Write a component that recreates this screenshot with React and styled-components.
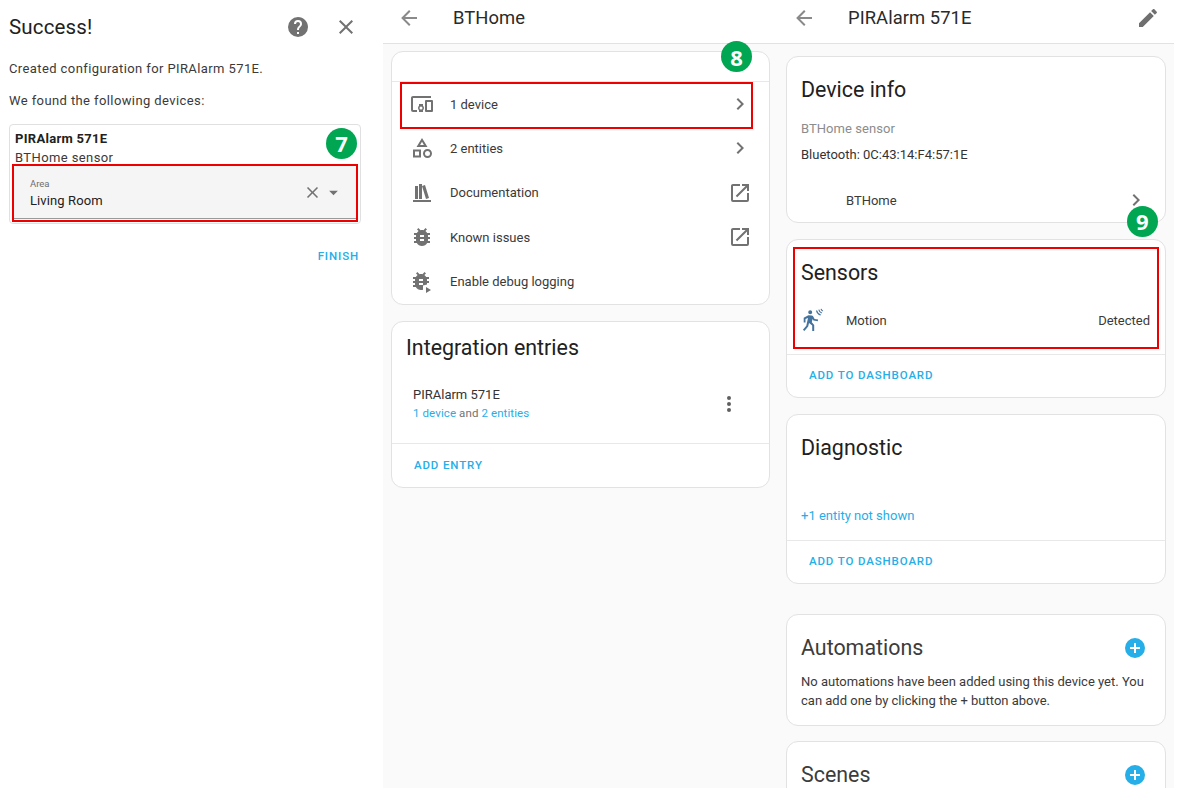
import React from "react";
import styled, { createGlobalStyle } from "styled-components";

const P = {
  help: "M15.07,11.25L14.17,12.17C13.45,12.89 13,13.5 13,15H11V14.5C11,13.39 11.45,12.39 12.17,11.67L13.41,10.41C13.78,10.05 14,9.55 14,9C14,7.89 13.1,7 12,7A2,2 0 0,0 10,9H8A4,4 0 0,1 12,5A4,4 0 0,1 16,9C16,9.88 15.64,10.67 15.07,11.25M13,19H11V17H13M12,2A10,10 0 0,0 2,12A10,10 0 0,0 12,22A10,10 0 0,0 22,12C22,6.47 17.5,2 12,2Z",
  close: "M19,6.41L17.59,5L12,10.59L6.41,5L5,6.41L10.59,12L5,17.59L6.41,19L12,13.41L17.59,19L19,17.59L13.41,12L19,6.41Z",
  caret: "M7,10L12,15L17,10H7Z",
  back: "M20,11V13H8L13.5,18.5L12.08,19.92L4.16,12L12.08,4.08L13.5,5.5L8,11H20Z",
  chevron: "M8.59,16.58L13.17,12L8.59,7.41L10,6L16,12L10,18L8.59,16.58Z",
  open: "M14,3V5H17.59L7.76,14.83L9.17,16.24L19,6.41V10H21V3M19,19H5V5H12V3H5C3.89,3 3,3.9 3,5V19A2,2 0 0,0 5,21H19A2,2 0 0,0 21,19V12H19V19Z",
  pencil: "M20.71,7.04C21.1,6.65 21.1,6 20.71,5.63L18.37,3.29C18,2.9 17.35,2.9 16.96,3.29L15.12,5.12L18.87,8.87M3,17.25V21H6.75L17.81,9.93L14.06,6.18L3,17.25Z",
  dots: "M12,16A2,2 0 0,1 14,18A2,2 0 0,1 12,20A2,2 0 0,1 10,18A2,2 0 0,1 12,16M12,10A2,2 0 0,1 14,12A2,2 0 0,1 12,14A2,2 0 0,1 10,12A2,2 0 0,1 12,10M12,4A2,2 0 0,1 14,6A2,2 0 0,1 12,8A2,2 0 0,1 10,6A2,2 0 0,1 12,4Z",
  plus: "M17,13H13V17H11V13H7V11H11V7H13V11H17M12,2A10,10 0 0,0 2,12A10,10 0 0,0 12,22A10,10 0 0,0 22,12A10,10 0 0,0 12,2Z",
  bug: "M14,12H10V10H14M14,16H10V14H14M20,8H17.19C16.74,7.22 16.12,6.55 15.37,6.04L17,4.41L15.59,3L13.42,5.17C12.96,5.06 12.5,5 12,5C11.5,5 11.04,5.06 10.59,5.17L8.41,3L7,4.41L8.62,6.04C7.88,6.55 7.26,7.22 6.81,8H4V10H6.09C6.04,10.33 6,10.66 6,11V12H4V14H6V15C6,15.34 6.04,15.67 6.09,16H4V18H6.81C7.85,19.79 9.78,21 12,21C14.22,21 16.15,19.79 17.19,18H20V16H17.91C17.96,15.67 18,15.34 18,15V14H20V12H18V11C18,10.66 17.96,10.33 17.91,10H20V8Z",
  bugPlay: "M13,12H9V10H13M13,16H9V14H13M19,8H16.19C15.74,7.22 15.12,6.55 14.37,6.04L16,4.41L14.59,3L12.42,5.17C11.96,5.06 11.5,5 11,5C10.5,5 10.04,5.06 9.59,5.17L7.41,3L6,4.41L7.62,6.04C6.88,6.55 6.26,7.22 5.81,8H3V10H5.09C5.04,10.33 5,10.66 5,11V12H3V14H5V15C5,15.34 5.04,15.67 5.09,16H3V18H5.81C6.85,19.79 8.78,21 11,21C11.7,21 12.4,20.88 13,20.66V16.5L17,15.6V14H19V12H17V11C17,10.66 16.96,10.33 16.91,10H19V8ZM16,18V24L21,21L16,18Z",
  shelf: "M9 3V18H12V3H9M12 5L16 18L19 17L15 4L12 5M5 5V18H8V5H5M3 19V21H21V19H3Z",
  devices: "M3,6H21V4H3C1.89,4 1,4.89 1,6V18A2,2 0 0,0 3,20H7V18H3V6M13,12H9V13.78C8.39,14.33 8,15.11 8,16C8,16.89 8.39,17.67 9,18.22V20H13V18.22C13.61,17.67 14,16.88 14,16C14,15.12 13.61,14.33 13,13.78V12M11,17.5A1.5,1.5 0 0,1 9.5,16A1.5,1.5 0 0,1 11,14.5A1.5,1.5 0 0,1 12.5,16A1.5,1.5 0 0,1 11,17.5M22,8H16A1,1 0 0,0 15,9V19A1,1 0 0,0 16,20H22A1,1 0 0,0 23,19V9A1,1 0 0,0 22,8M21,18H17V10H21V18Z",
  shape: "M11,13.5V21.5H3V13.5H11M9,15.5H5V19.5H9V15.5M12,2L17.5,11H6.5L12,2M12,5.86L10.08,9H13.92L12,5.86M17.5,13C20,13 22,15 22,17.5C22,20 20,22 17.5,22C15,22 13,20 13,17.5C13,15 15,13 17.5,13M17.5,15A2.5,2.5 0 0,0 15,17.5A2.5,2.5 0 0,0 17.5,20A2.5,2.5 0 0,0 20,17.5A2.5,2.5 0 0,0 17.5,15Z",
};

const Global = createGlobalStyle`
  html, body { margin: 0; padding: 0; background: #fff; }
  body { font-family: Roboto, "Liberation Sans", sans-serif; color: #212121; overflow: hidden; }
  * { box-sizing: border-box; }
`;

const Svg = styled.svg`
  display: block;
  flex: none;
  width: ${(p) => p.$size || 24}px;
  height: ${(p) => p.$size || 24}px;
  fill: ${(p) => p.$color || "#727272"};
`;
const Icon = ({ d, size, color }) => (
  <Svg viewBox="0 0 24 24" $size={size} $color={color}><path d={d} /></Svg>
);

const Page = styled.div`
  display: flex;
  width: 1174px;
  height: 788px;
  overflow: hidden;
`;
const Dialog = styled.section`
  position: relative;
  flex: none;
  width: 383px;
  background: #fff;
  padding: 0 9px;
`;
const Screen = styled.section`
  position: relative;
  flex: none;
  width: ${(p) => p.$w}px;
  background: #fafafa;
  overflow: hidden;
`;
const DialogHead = styled.div`
  display: flex;
  align-items: center;
  height: 54px;
`;
const DialogTitle = styled.h2`
  flex: 1;
  margin: 0;
  font-size: 20.5px;
  font-weight: 400;
  letter-spacing: 0.15px;
  color: #212121;
`;
const HeadIcons = styled.div`
  display: flex;
  gap: 24px;
  margin-right: 16px;
`;
const DialogBody = styled.div`
  display: flex;
  flex-direction: column;
  gap: 16px;
  padding-top: 7px;
  margin-bottom: 14.5px;
`;
const DialogText = styled.p`
  margin: 0;
  height: 16px;
  font-size: 13px;
  line-height: 16px;
  letter-spacing: 0.4px;
  color: #3a3a3a;
`;
const DeviceCard = styled.div`
  position: relative;
  width: 352px;
  height: 100.5px;
  padding: 5.5px 5px 0;
  border: 1px solid #e0e0e0;
  border-radius: 4px;
`;
const DeviceName = styled.div`
  font-size: 13px;
  line-height: 17px;
  font-weight: 700;
  letter-spacing: 0.3px;
`;
const DeviceModel = styled.div`
  font-size: 13px;
  line-height: 17px;
  margin-top: 2px;
  letter-spacing: 0.4px;
  color: #3a3a3a;
`;
const Field = styled.div`
  display: flex;
  align-items: center;
  gap: 1px;
  height: 53px;
  margin: 0 -1px;
  width: 342px;
  padding: 0 12.5px 0 16px;
  background: #f5f5f5;
  border-bottom: 1px solid #9a9a9a;
  border-radius: 3px 3px 0 0;
`;
const FieldBody = styled.div`
  flex: 1;
  padding-top: 4px;
`;
const FieldLabel = styled.div`
  font-size: 9.5px;
  line-height: 12px;
  color: #6f6f6f;
`;
const FieldValue = styled.div`
  font-size: 13px;
  line-height: 18px;
  margin-top: 2px;
  letter-spacing: 0.1px;
`;
const DialogFoot = styled.div`
  display: flex;
  justify-content: flex-end;
  width: 350px;
  margin-top: 25px;
`;
const Action = styled.span`
  font-size: 11.5px;
  line-height: 14px;
  font-weight: 500;
  letter-spacing: 0.87px;
  color: #26aee8;
`;
const Header = styled.header`
  display: flex;
  align-items: center;
  height: 44px;
  padding: 0 14px 8px 14px;
  background: #fff;
  border-bottom: 1px solid #e2e2e2;
`;
const ScreenTitle = styled.h1`
  flex: 1;
  margin: 0 0 0 32px;
  font-size: 18.4px;
  font-weight: 400;
  letter-spacing: 0.05px;
  color: #2a2a2a;
`;
const Cards = styled.div`
  display: flex;
  flex-direction: column;
  padding: ${(p) => p.$top}px 8px 0 ${(p) => p.$left}px;
`;
const Card = styled.div`
  position: relative;
  flex: none;
  height: ${(p) => p.$h}px;
  margin-bottom: ${(p) => p.$gap ?? 15.5}px;
  background: #fff;
  border: 1px solid #e2e2e2;
  border-radius: 12px;
`;
const CardTop = styled.div`
  height: 30px;
  border-bottom: 1px solid #e8e8e8;
`;
const NavRow = styled.div`
  display: flex;
  align-items: center;
  height: 44.3px;
  padding: 0 17px 0 18px;
`;
const RowLabel = styled.span`
  flex: 1;
  margin-left: 16px;
  font-size: 13px;
  color: #3a3a3a;
`;
const CardTitle = styled.h3`
  display: flex;
  align-items: center;
  justify-content: space-between;
  margin: 0;
  padding: ${(p) => p.$pt ?? 17}px 18px 0 14px;
  font-size: 21.4px;
  line-height: 32px;
  font-weight: 400;
  color: ${(p) => (p.$soft ? "#3c3c3c" : "#212121")};
`;
const EntryRow = styled.div`
  display: flex;
  align-items: center;
  height: 68px;
  margin-top: 11px;
  padding: 0 28px 10px 21px;
`;
const EntryBody = styled.div`
  flex: 1;
`;
const EntryName = styled.div`
  font-size: 13px;
  line-height: 18px;
  color: #333;
`;
const EntrySub = styled.div`
  font-size: 11.5px;
  line-height: 16px;
  margin-top: 1px;
  letter-spacing: 0.1px;
  color: #727272;
`;
const Link = styled.span`
  color: #26aee8;
`;
const CardFoot = styled.div`
  display: flex;
  align-items: center;
  height: 43px;
  margin-top: ${(p) => p.$mt || 0}px;
  padding: 0 0 ${(p) => p.$pb || 0}px ${(p) => p.$left}px;
  border-top: 1px solid #e8e8e8;
`;
const InfoLine = styled.div`
  padding: 0 14px;
  margin-top: ${(p) => p.$mt}px;
  font-size: 13px;
  line-height: 18px;
  letter-spacing: ${(p) => (p.$muted ? 0.05 : 0)}px;
  color: ${(p) => (p.$muted ? "#8c8c8c" : "#333")};
`;
const LinkRow = styled.div`
  display: flex;
  align-items: center;
  justify-content: space-between;
  margin-top: 24px;
  padding: 0 17px 0 59px;
  font-size: 13px;
  color: #3a3a3a;
`;
const SensorRow = styled.div`
  display: flex;
  align-items: center;
  height: 32px;
  margin-top: 15px;
  padding: 0 15px 0 14px;
  font-size: 13px;
  color: #3a3a3a;
`;
const SensorLabel = styled.span`
  flex: 1;
  margin-left: 21px;
`;
const MoreLink = styled.div`
  margin-top: 43px;
  padding-left: 14px;
  height: 33px;
  font-size: 13px;
  line-height: 18px;
  color: #26aee8;
`;
const EmptyNote = styled.p`
  margin: 8px 0 0;
  padding: 0 14px;
  font-size: 13px;
  line-height: 19px;
  color: #3a3a3a;
`;
const Highlight = styled.div`
  position: absolute;
  left: ${(p) => p.$x}px;
  top: ${(p) => p.$y}px;
  width: ${(p) => p.$w}px;
  height: ${(p) => p.$h}px;
  border: 2px solid #ee0000;
`;
const Badge = styled.div`
  position: absolute;
  left: ${(p) => p.$x - 15.5}px;
  top: ${(p) => p.$y - 15.5}px;
  display: flex;
  align-items: center;
  justify-content: center;
  width: 31px;
  height: 31px;
  border-radius: 50%;
  background: #00a651;
  color: #fff;
  font-family: "Open Sans", "Liberation Sans", sans-serif;
  font-size: 22px;
  font-weight: 700;
`;

const MotionIcon = () => (
  <Svg viewBox="0 0 24 24" $size={24} $color="#44739e">
    <path d="M9.2 2.2a2 2 0 1 1 0 4 2 2 0 0 1 0-4ZM7.4 7.2l3.4.3c.6 0 1 .3 1.3.8l1.5 2.6 3.5.6-.3 1.7-4.3-.8-1-1.5-.7 3.4 2.4 2.6V23h-2v-5.5L8 15l-.8 3.4L3.4 23l-1.5-1.2 3.4-4.1L7 10l-2.5 1v3.4H2.7V9.8L7.4 7.2Z" />
    <path fill="none" stroke="#44739e" strokeWidth="1.1" d="M15.5 2.5c.5 2 2 3.8 4.2 4.6M17.8 1.6c.4 1.6 1.5 2.9 3 3.5M20 .9c.3.9.8 1.6 1.8 2" />
  </Svg>
);

export default function App() {
  return (
    <>
      <Global />
      <Page>
        <Dialog>
          <DialogHead>
            <DialogTitle>Success!</DialogTitle>
            <HeadIcons>
              <Icon d={P.help} />
              <Icon d={P.close} />
            </HeadIcons>
          </DialogHead>
          <DialogBody>
            <DialogText>Created configuration for PIRAlarm 571E.</DialogText>
            <DialogText>We found the following devices:</DialogText>
          </DialogBody>
          <DeviceCard>
            <DeviceName>PIRAlarm 571E</DeviceName>
            <DeviceModel>BTHome sensor</DeviceModel>
            <Field>
              <FieldBody>
                <FieldLabel>Area</FieldLabel>
                <FieldValue>Living Room</FieldValue>
              </FieldBody>
              <Icon d={P.close} size={19} />
              <Icon d={P.caret} size={21} />
            </Field>
          </DeviceCard>
          <DialogFoot><Action>FINISH</Action></DialogFoot>
          <Highlight $x={12} $y={164} $w={346} $h={58} />
          <Badge $x={341.5} $y={143.3}>7</Badge>
        </Dialog>

        <Screen $w={395}>
          <Header>
            <Icon d={P.back} color="#8a8a8a" />
            <ScreenTitle>BTHome</ScreenTitle>
          </Header>
          <Cards $top={7} $left={8}>
            <Card $h={254}>
              <CardTop />
              <NavRow><Icon d={P.devices} /><RowLabel>1 device</RowLabel><Icon d={P.chevron} /></NavRow>
              <NavRow><Icon d={P.shape} /><RowLabel>2 entities</RowLabel><Icon d={P.chevron} /></NavRow>
              <NavRow><Icon d={P.shelf} /><RowLabel>Documentation</RowLabel><Icon d={P.open} /></NavRow>
              <NavRow><Icon d={P.bug} /><RowLabel>Known issues</RowLabel><Icon d={P.open} /></NavRow>
              <NavRow><Icon d={P.bugPlay} /><RowLabel>Enable debug logging</RowLabel></NavRow>
            </Card>
            <Card $h={167}>
              <CardTitle $pt={10}>Integration entries</CardTitle>
              <EntryRow>
                <EntryBody>
                  <EntryName>PIRAlarm 571E</EntryName>
                  <EntrySub><Link>1 device</Link> and <Link>2 entities</Link></EntrySub>
                </EntryBody>
                <Icon d={P.dots} color="#5f5f5f" />
              </EntryRow>
              <CardFoot $left={22}><Action>ADD ENTRY</Action></CardFoot>
            </Card>
          </Cards>
          <Highlight $x={17} $y={82} $w={353} $h={47} />
          <Badge $x={353.5} $y={56.7}>8</Badge>
        </Screen>

        <Screen $w={396}>
          <Header>
            <Icon d={P.back} color="#8a8a8a" />
            <ScreenTitle>PIRAlarm 571E</ScreenTitle>
            <Icon d={P.pencil} color="#6f6f6f" />
          </Header>
          <Cards $top={12} $left={8}>
            <Card $h={167} $gap={16}>
              <CardTitle>Device info</CardTitle>
              <InfoLine $muted $mt={14}>BTHome sensor</InfoLine>
              <InfoLine $mt={8}>Bluetooth: 0C:43:14:F4:57:1E</InfoLine>
              <LinkRow><span>BTHome</span><Icon d={P.chevron} /></LinkRow>
            </Card>
            <Card $h={159}>
              <CardTitle>Sensors</CardTitle>
              <SensorRow><MotionIcon /><SensorLabel>Motion</SensorLabel><span>Detected</span></SensorRow>
              <CardFoot $left={22} $mt={18} $pb={2}><Action>ADD TO DASHBOARD</Action></CardFoot>
            </Card>
            <Card $h={170} $gap={30}>
              <CardTitle>Diagnostic</CardTitle>
              <MoreLink>+1 entity not shown</MoreLink>
              <CardFoot $left={22} $pb={2}><Action>ADD TO DASHBOARD</Action></CardFoot>
            </Card>
            <Card $h={112}>
              <CardTitle $soft>Automations<Icon d={P.plus} color="#26aee8" /></CardTitle>
              <EmptyNote>No automations have been added using this device yet. You can add one by clicking the + button above.</EmptyNote>
            </Card>
            <Card $h={120} $gap={0}>
              <CardTitle $soft>Scenes<Icon d={P.plus} color="#26aee8" /></CardTitle>
            </Card>
          </Cards>
          <Highlight $x={14.5} $y={247} $w={366.5} $h={102} />
          <Badge $x={364.3} $y={221}>9</Badge>
        </Screen>
      </Page>
    </>
  );
}
